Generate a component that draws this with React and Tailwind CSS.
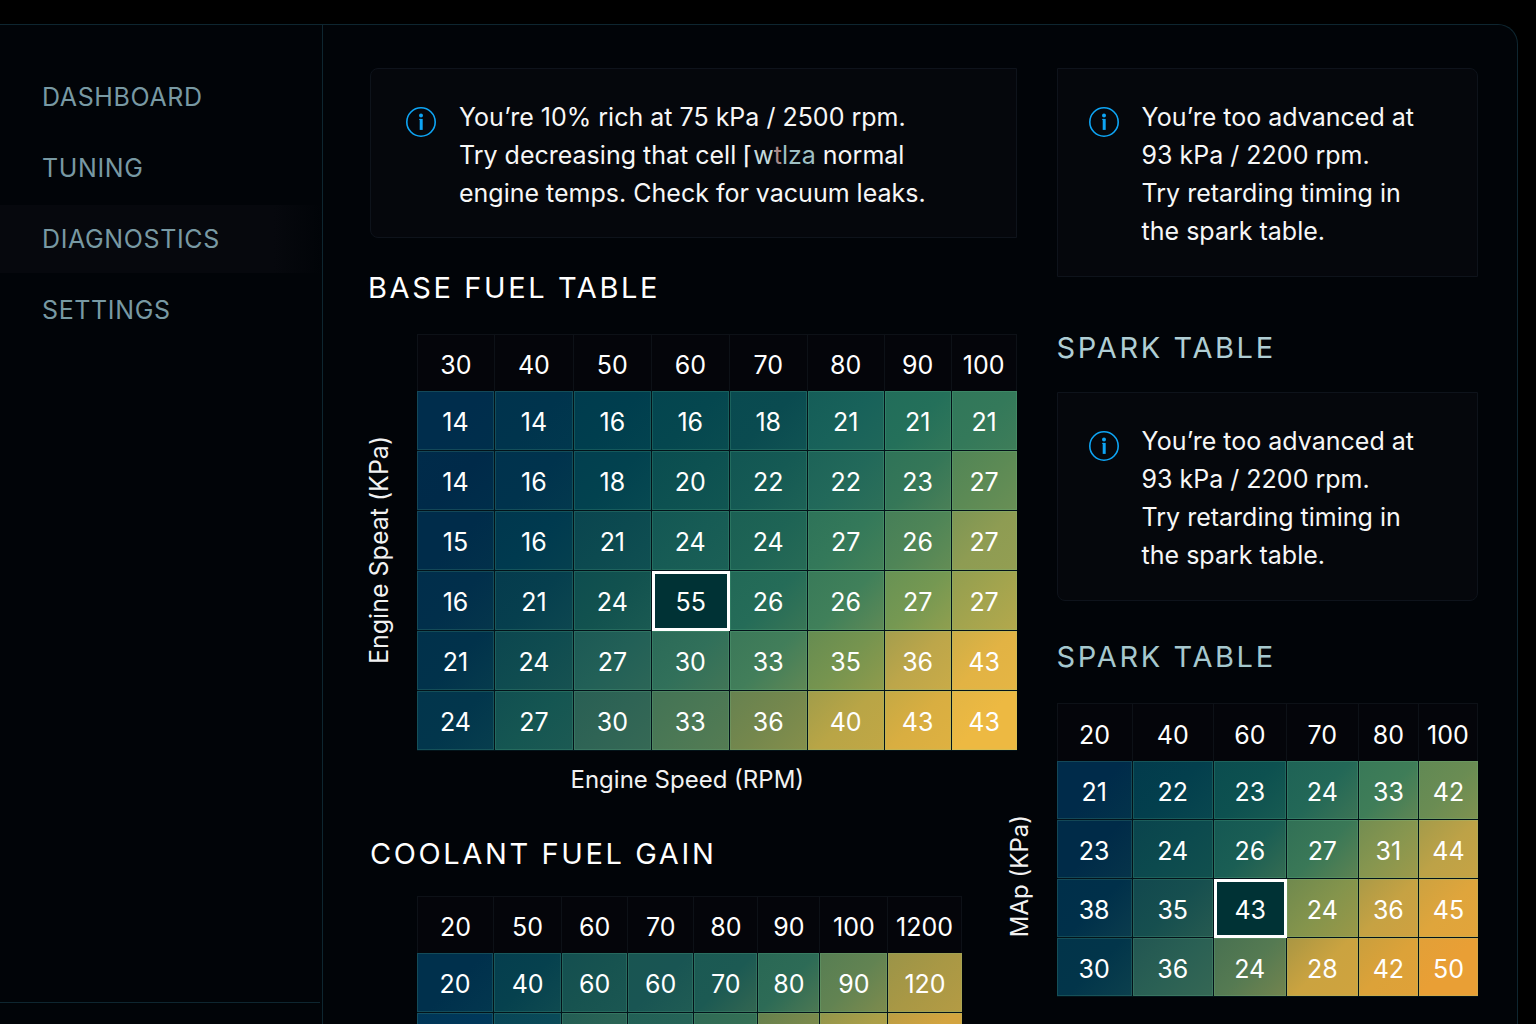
import React from "react";

const NAV = ["Dashboard", "Tuning", "Diagnostics", "Settings"];

const BASE_FUEL = {
  label: "Base fuel table",
  columns: [78, 79, 78, 78, 78, 77, 67, 65],
  head: [30, 40, 50, 60, 70, 80, 90, 100],
  rows: [
    [14, 14, 16, 16, 18, 21, 21, 21],
    [14, 16, 18, 20, 22, 22, 23, 27],
    [15, 16, 21, 24, 24, 27, 26, 27],
    [16, 21, 24, 55, 26, 26, 27, 27],
    [21, 24, 27, 30, 33, 35, 36, 43],
    [24, 27, 30, 33, 36, 40, 43, 43],
  ],
  colors: [
    ["#002d4c", "#00344d", "#003e4e", "#05474f", "#0a4b50", "#18625a", "#24705a", "#34795a"],
    ["#002a49", "#00334d", "#02424f", "#0d5151", "#155a54", "#22695a", "#357758", "#5c8a55"],
    ["#002c4a", "#003a4f", "#0c4a50", "#175c55", "#1e6455", "#34795a", "#4f8557", "#8e9c53"],
    ["#012f4b", "#063f4e", "#12524f", "#1d6056", "#256c58", "#40805a", "#759852", "#a3a44e"],
    ["#01324b", "#0f4c50", "#226057", "#31705a", "#427e5a", "#76944f", "#bda64a", "#e2b344"],
    ["#02364c", "#155652", "#2f6455", "#4b7855", "#74874d", "#b9a546", "#d9ae41", "#edb942"],
  ],
  selected: [3, 3],
};

const COOLANT = {
  label: "Coolant fuel gain",
  columns: [77, 68, 66, 66, 64, 62, 68, 73],
  head: [20, 50, 60, 70, 80, 90, 100, 1200],
  rows: [
    [20, 40, 60, 60, 70, 80, 90, 120],
    ["", "", "", "", "", "", "", ""],
  ],
  colors: [
    ["#00304c", "#06414e", "#175350", "#195553", "#1c5a53", "#2d6b56", "#628352", "#a99845"],
    ["#00385a", "#0a4a58", "#2a6455", "#256357", "#346f55", "#79894c", "#ab9f48", "#d3a43f"],
  ],
};

const SPARK = {
  label: "Spark table",
  columns: [76, 81, 73, 72, 60, 59],
  head: [20, 40, 60, 70, 80, 100],
  rows: [
    [21, 22, 23, 24, 33, 42],
    [23, 24, 26, 27, 31, 44],
    [38, 35, 43, 24, 36, 45],
    [30, 36, 24, 28, 42, 50],
  ],
  colors: [
    ["#002b4a", "#033f4d", "#0d5150", "#236857", "#3f7d58", "#6a8c53"],
    ["#002b48", "#0c4a4e", "#1a5e54", "#3a7857", "#87964f", "#bda247"],
    ["#00304a", "#164f4f", "#20604f", "#84944c", "#c6a243", "#dfa53c"],
    ["#02354a", "#2a6054", "#557a52", "#cba340", "#dca239", "#e99f35"],
  ],
  selected: [2, 2],
};

function mix(a, b, t) {
  const channel = (hex, i) => parseInt(hex.slice(i, i + 2), 16);
  const parts = [1, 3, 5].map((i) =>
    Math.round(channel(a, i) * (1 - t) + channel(b, i) * t)
  );
  return `rgb(${parts.join(",")})`;
}

function shade(colors, r, c) {
  const base = colors[r][c];
  const before = colors[Math.max(r - 1, 0)][Math.max(c - 1, 0)];
  const after =
    colors[Math.min(r + 1, colors.length - 1)][Math.min(c + 1, colors[r].length - 1)];
  return `linear-gradient(135deg, ${mix(base, before, 0.2)}, ${base} 50%, ${mix(base, after, 0.25)})`;
}

function HeatTable({ data, headClass, rowClass }) {
  const total = data.columns.reduce((sum, width) => sum + width, 0);
  return (
    <table
      aria-label={data.label}
      className="w-full table-fixed border-separate border-spacing-0 text-center text-[25px] leading-8 text-white"
    >
      <colgroup>
        {data.columns.map((width, i) => (
          <col key={i} style={{ width: `${(width / total) * 100}%` }} />
        ))}
      </colgroup>
      <thead>
        <tr className={headClass}>
          {data.head.map((value, i) => (
            <th
              key={i}
              scope="col"
              className="border-t border-r border-[#0d1117] bg-[#04050a] p-0 pt-1 font-normal first:border-l"
            >
              {value}
            </th>
          ))}
        </tr>
      </thead>
      <tbody>
        {data.rows.map((row, r) => (
          <tr key={r} className={rowClass}>
            {row.map((value, c) => {
              const selected =
                data.selected && data.selected[0] === r && data.selected[1] === c;
              return selected ? (
                <td
                  key={c}
                  aria-selected="true"
                  className="border-[3px] border-white bg-[#003235] p-0 pt-0.5"
                >
                  {value}
                </td>
              ) : (
                <td
                  key={c}
                  className="border-r border-b border-[#03131a] p-0 pt-[3px] shadow-[inset_0_0_0_1px_rgba(120,220,160,0.16)] last:border-r-0"
                  style={{ backgroundImage: shade(data.colors, r, c) }}
                >
                  {value}
                </td>
              );
            })}
          </tr>
        ))}
      </tbody>
    </table>
  );
}

function InfoIcon() {
  return (
    <svg
      viewBox="0 0 32 32"
      className="mt-2 size-8 shrink-0"
      fill="none"
      stroke="#0ea5f5"
      aria-hidden="true"
    >
      <circle cx="16" cy="16" r="14.2" strokeWidth="1.6" />
      <circle cx="16" cy="9.4" r="2" fill="#0ea5f5" stroke="none" />
      <path d="M14.2 13.4h2" strokeWidth="1" />
      <path d="M16.2 12.9v11" strokeWidth="3" />
    </svg>
  );
}

function Notice({ className, children }) {
  return (
    <section
      className={`flex gap-[22px] border border-[#0e131b] bg-[#05070c] pt-[29px] text-[25px] leading-[38px] text-[#f7f7f7] ${className}`}
    >
      <InfoIcon />
      <p>{children}</p>
    </section>
  );
}

function SparkNotice({ className }) {
  return (
    <Notice className={`pb-[26px] pl-[30px] ${className}`}>
      You’re too advanced at
      <br />
      93 kPa / 2200 rpm.
      <br />
      Try retarding timing in
      <br />
      the spark table.
    </Notice>
  );
}

function AxisLabel({ className, children }) {
  return (
    <div className={`flex shrink-0 items-center ${className}`}>
      <span className="rotate-180 leading-[26px] whitespace-nowrap text-[#f2f2f2] [writing-mode:vertical-rl]">
        {children}
      </span>
    </div>
  );
}

export default function App() {
  return (
    <div className="h-screen overflow-hidden bg-black pt-6 pr-[18px] font-[Inter,sans-serif]">
      <div className="flex h-full rounded-tr-[20px] border-t border-r border-[#0e2630] bg-[#010408]">
        <aside className="flex w-[323px] shrink-0 flex-col border-r border-[#0e2630] pt-[38px]">
          <nav className="flex flex-col gap-[3px]">
            {NAV.map((item) => (
              <a
                key={item}
                href={`#${item.toLowerCase()}`}
                className={`flex h-[68px] items-center pl-[42px] text-[25px] leading-8 tracking-wide text-[#7899a3] uppercase ${
                  item === "Diagnostics"
                    ? "bg-linear-to-r from-[#06080d] from-85% to-transparent"
                    : ""
                }`}
              >
                {item}
              </a>
            ))}
          </nav>
          <div className="mt-auto mr-0.5 h-[22px] border-t border-[#0e2630]" />
        </aside>

        <main className="grid min-w-0 flex-1 grid-cols-[646fr_421fr] items-start gap-10 pt-[43px] pr-[39px] pl-[47px]">
          <div className="min-w-0">
            <Notice className="rounded-l-lg pb-[25px] pl-[34px]">
              You’re 10% rich at 75 kPa / 2500 rpm.
              <br />
              Try decreasing that cell ⌈
              <span className="text-[#c3dadd]">w</span>
              <span className="text-[#a98a88]">t</span>
              <span className="text-[#9fc0c4]">lza</span> normal
              <br />
              engine temps. Check for vacuum leaks.
            </Notice>
            <h2 className="-ml-0.5 mt-[30px] text-[29px] leading-10 font-normal tracking-[0.09em] text-white">
              BASE FUEL TABLE
            </h2>
            <div className="mt-[26px] flex">
              <AxisLabel className="-ml-1 w-[51px] pt-4 text-[25px]">
                Engine Speat (KPa)
              </AxisLabel>
              <div className="min-w-0 flex-1">
                <HeatTable data={BASE_FUEL} headClass="h-[57px]" rowClass="h-[60px]" />
              </div>
            </div>
            <p className="mt-[9px] pr-3 text-center text-2xl leading-10 text-[#f2f2f2]">
              Engine Speed (RPM)
            </p>
            <h2 className="mt-[34px] text-[29px] leading-10 font-normal tracking-[0.09em] text-white">
              COOLANT FUEL GAIN
            </h2>
            <div className="mt-[22px] pr-[55px] pl-[47px]">
              <HeatTable data={COOLANT} headClass="h-[57px]" rowClass="h-[60px]" />
            </div>
          </div>

          <div className="min-w-0">
            <SparkNotice className="rounded-tr-lg" />
            <h2 className="mt-[51px] text-[29px] leading-10 font-normal tracking-[0.09em] text-[#b0ced4]">
              SPARK TABLE
            </h2>
            <SparkNotice className="mt-6 rounded-b-lg" />
            <h2 className="mt-9 text-[29px] leading-10 font-normal tracking-[0.09em] text-[#a6c8ce]">
              SPARK TABLE
            </h2>
            <div className="mt-[26px] -ml-[50px] flex">
              <AxisLabel className="w-[50px] pt-[52px] text-2xl">MAp (KPa)</AxisLabel>
              <div className="min-w-0 flex-1">
                <HeatTable data={SPARK} headClass="h-[58px]" rowClass="h-[59px]" />
              </div>
            </div>
          </div>
        </main>
      </div>
    </div>
  );
}
